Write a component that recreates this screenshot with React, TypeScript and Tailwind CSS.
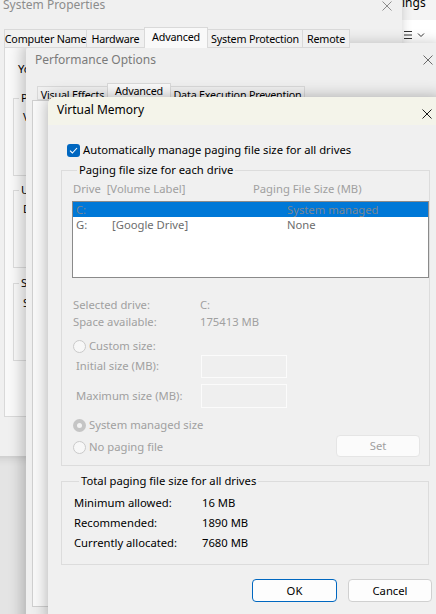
import React from 'react';

const CloseX: React.FC<{ color?: string; className?: string }> = ({ color = '#1a1a1a', className = '' }) => (
  <svg width="10" height="10" viewBox="0 0 10 10" className={className}>
    <path d="M0.5 0.5 L9.5 9.5 M9.5 0.5 L0.5 9.5" stroke={color} strokeWidth="1" fill="none" />
  </svg>
);

const Radio: React.FC<{ checked?: boolean }> = ({ checked }) =>
  checked ? (
    <span className="w-[13px] h-[13px] rounded-full bg-[#c5c5c5] flex items-center justify-center shrink-0">
      <span className="w-[5px] h-[5px] rounded-full bg-[#f3f3f3]" />
    </span>
  ) : (
    <span className="w-[13px] h-[13px] rounded-full border border-[#cacaca] bg-[#f7f7f7] shrink-0" />
  );

const Legend: React.FC<{ children: React.ReactNode }> = ({ children }) => (
  <legend className="ml-[5px] px-[2px] leading-[16px] text-[#000] whitespace-nowrap">{children}</legend>
);

const SysTab: React.FC<{ label: string; w: string; active?: boolean }> = ({ label, w, active }) => (
  <div
    className={`${w} flex items-start justify-center whitespace-nowrap border border-[#d9d9d9] -ml-px ${
      active ? 'h-[21px] bg-[#f9f9f9] border-b-0 pt-[2px]' : 'h-[19px] bg-[#f0f0f0] pt-[2px]'
    }`}
  >
    {label}
  </div>
);

export default function App() {
  return (
    <div className="relative w-[436px] h-[614px] overflow-hidden bg-[#e4e4e4] font-['Noto_Sans','Liberation_Sans',sans-serif] text-[11.25px] text-black">
      {/* background app at top right */}
      <div className="absolute left-[360px] top-0 w-[90px] h-[60px] bg-white">
        <div className="h-[20px] bg-[#f4f4f4] flex items-start text-[12px] leading-[8px] whitespace-nowrap">
          <span className="ml-[20px] -mt-[1px]">Settings</span>
          <span className="ml-[17px] -mt-[1px]">R</span>
        </div>
        <div className="flex items-center mt-[9px] ml-[44px] gap-[5px]">
          <svg width="8" height="10" viewBox="0 0 8 10">
            <path d="M0 1.5 H8 M0 5 H8 M0 8.5 H8" stroke="#333" strokeWidth="1" />
          </svg>
          <svg width="8" height="6" viewBox="0 0 8 6">
            <path d="M1 1.5 L4 4.5 L7 1.5" stroke="#333" strokeWidth="1" fill="none" />
          </svg>
          <span className="ml-[7px] text-[#0067c0] text-[12px] leading-[12px]">1</span>
        </div>
      </div>

      {/* System Properties */}
      <div className="absolute left-[-20px] top-[-6px] w-[422px] h-[462px] bg-[#f0f0f0] shadow-[0_0_10px_rgba(0,0,0,0.18)] flex flex-col">
        <div className="h-[30px] flex items-start justify-between pt-[3px]">
          <span className="ml-[23px] leading-[16px] text-[12px] text-[#8c8c8c]">System Properties</span>
          <CloseX color="#8c8c8c" className="mr-[10px] mt-[4px]" />
        </div>
        <div className="mt-[3px] h-[21px] ml-[25px] flex items-end leading-[15px] text-[10.75px] tracking-[-0.2px] relative z-10">
          <SysTab label="Computer Name" w="w-[83px]" />
          <SysTab label="Hardware" w="w-[59px]" />
          <SysTab label="Advanced" w="w-[64px]" active />
          <SysTab label="System Protection" w="w-[96px]" />
          <SysTab label="Remote" w="w-[48px]" />
        </div>
        <div className="ml-[24px] w-[392px] h-[370px] border border-[#d9d9d9] bg-[#f9f9f9] -mt-px px-[8px] whitespace-nowrap overflow-hidden">
          <div className="pt-[13px] pl-[5px] leading-[16px]">
            You must be logged on as an Administrator to make most of these changes.
          </div>
          <fieldset className="mt-[13px] h-[86px] border border-[#dcdcdc]">
            <Legend>Performance</Legend>
            <div className="pl-[9px] mt-[3px] leading-[16px]">
              Visual effects, processor scheduling, memory usage, and virtual memory
            </div>
          </fieldset>
          <fieldset className="mt-[6px] h-[86px] border border-[#dcdcdc]">
            <Legend>User Profiles</Legend>
            <div className="pl-[9px] mt-[3px] leading-[16px]">Desktop settings related to your sign-in</div>
          </fieldset>
          <fieldset className="mt-[7px] h-[86px] border border-[#dcdcdc]">
            <Legend>Startup and Recovery</Legend>
            <div className="pl-[9px] mt-[4px] leading-[16px]">
              System startup, system failure, and debugging information
            </div>
          </fieldset>
        </div>
      </div>

      {/* Performance Options */}
      <div className="absolute left-[26px] top-[43px] w-[420px] h-[590px] bg-[#efefef] shadow-[-4px_0_14px_rgba(0,0,0,0.22)] rounded-[7px] flex flex-col">
        <div className="h-[40px] flex items-start justify-between pt-[9px]">
          <span className="ml-[9px] leading-[16px] text-[12px] text-[#7a7a7a]">Performance Options</span>
          <CloseX color="#6a6a6a" className="mr-[13px] mt-[3px]" />
        </div>
        <div className="h-[17px] ml-[11px] flex items-end leading-[14px] whitespace-nowrap text-[10.75px] tracking-[-0.2px]">
          <div className="w-[71px] h-[14px] border border-[#d9d9d9] bg-[#f0f0f0] flex justify-center pt-[1px]">
            Visual Effects
          </div>
          <div className="w-[64px] h-[17px] border border-[#d9d9d9] border-b-0 -ml-px bg-[#f9f9f9] flex justify-center">
            Advanced
          </div>
          <div className="w-[135px] h-[14px] border border-[#d9d9d9] -ml-px bg-[#f0f0f0] flex justify-center pt-[1px]">
            Data Execution Prevention
          </div>
        </div>
        <div className="ml-[6px] w-[420px] h-[507px] border border-[#cfcfcf] bg-[#f9f9f9]" />
      </div>

      {/* Virtual Memory */}
      <div className="absolute left-[48px] top-[97px] w-[396px] h-[530px] bg-[#f0f0f0] rounded-[7px] shadow-[0_0_16px_rgba(0,0,0,0.3)] overflow-hidden flex flex-col">
        <div className="h-[28px] bg-[#f4f4ea] flex items-start justify-between pt-[5px]">
          <span className="ml-[9px] leading-[16px] text-[12px]">Virtual Memory</span>
          <CloseX className="mr-[12px] mt-[7px]" />
        </div>
        <div className="px-[13px] flex flex-col">
          <label className="mt-[17px] h-[16px] pl-[6px] flex items-center gap-[3px] leading-[16px]">
            <span className="w-[13px] h-[13px] rounded-[3px] bg-[#0067c0] flex items-center justify-center">
              <svg width="9" height="7" viewBox="0 0 9 7">
                <path d="M1 3.6 L3.4 6 L8 1" stroke="#fff" strokeWidth="1.1" fill="none" />
              </svg>
            </span>
            <span>Automatically manage paging file size for all drives</span>
          </label>

          <fieldset className="mt-[4px] w-[368px] border border-[#dcdcdc] pl-[10px] pb-[10px]">
            <Legend>Paging file size for each drive</Legend>
            <div className="mt-[3px] h-[16px] flex leading-[16px] text-[#a0a0a0] pl-[1px] whitespace-pre">
              <span className="w-[180px]">Drive  [Volume Label]</span>
              <span>Paging File Size (MB)</span>
            </div>
            <div className="mt-[4px] w-[357px] h-[77px] border border-[#8a8a8a] bg-white flex flex-col">
              <div className="h-[15px] bg-[#0078d7] flex leading-[15px] text-[#7d8791] pl-[3px]">
                <span className="w-[211px]">C:</span>
                <span>System managed</span>
              </div>
              <div className="h-[15px] flex leading-[15px] text-[#6d6d6d] pl-[3px]">
                <span className="w-[36px]">G:</span>
                <span className="w-[175px]">[Google Drive]</span>
                <span>None</span>
              </div>
            </div>

            <div className="mt-[18px] flex flex-col text-[#a0a0a0] pl-[1px] leading-[17px]">
              <div className="h-[17px] flex">
                <span className="w-[127px]">Selected drive:</span>
                <span>C:</span>
              </div>
              <div className="h-[17px] flex">
                <span className="w-[127px]">Space available:</span>
                <span>175413 MB</span>
              </div>
            </div>

            <div className="mt-[8px] h-[16px] flex items-center gap-[3px] pl-[1px] text-[#a0a0a0]">
              <Radio />
              <span>Custom size:</span>
            </div>
            <div className="h-[24px] flex items-center text-[#a0a0a0]">
              <span className="w-[129px] pl-[4px]">Initial size (MB):</span>
              <span className="w-[86px] h-[23px] border border-[#fbfbfb] bg-[#efefef]" />
            </div>
            <div className="mt-[6px] h-[24px] flex items-center text-[#a0a0a0]">
              <span className="w-[129px] pl-[4px]">Maximum size (MB):</span>
              <span className="w-[86px] h-[24px] border border-[#fbfbfb] bg-[#efefef]" />
            </div>

            <div className="flex justify-between items-end">
              <div className="flex flex-col text-[#a0a0a0]">
                <div className="mt-[9px] h-[16px] flex items-center gap-[3px] pl-[1px]">
                  <Radio checked />
                  <span>System managed size</span>
                </div>
                <div className="mt-[6px] h-[16px] flex items-center gap-[3px] pl-[1px]">
                  <Radio />
                  <span>No paging file</span>
                </div>
              </div>
              <button className="w-[84px] h-[22px] mr-[9px] -mb-[2px] rounded-[4px] border border-[#e5e5e5] bg-[#fbfbfb] text-[#a0a0a0] leading-[20px]">
                Set
              </button>
            </div>
          </fieldset>

          <fieldset className="mt-[7px] w-[368px] border border-[#dcdcdc] pl-[12px] pb-[11px]">
            <Legend>Total paging file size for all drives</Legend>
            <div className="mt-[4px] flex flex-col leading-[20px]">
              <div className="h-[20px] flex">
                <span className="w-[128px]">Minimum allowed:</span>
                <span>16 MB</span>
              </div>
              <div className="h-[20px] flex">
                <span className="w-[128px]">Recommended:</span>
                <span>1890 MB</span>
              </div>
              <div className="h-[20px] flex">
                <span className="w-[128px]">Currently allocated:</span>
                <span>7680 MB</span>
              </div>
            </div>
          </fieldset>

          <div className="mt-[14px] -mr-[1px] flex justify-end gap-[11px]">
            <button className="w-[85px] h-[23px] rounded-[4px] border border-[#0067c0] bg-[#fdfdfd] leading-[21px]">
              OK
            </button>
            <button className="w-[84px] h-[23px] rounded-[4px] border border-[#d0d0d0] bg-[#fdfdfd] leading-[21px]">
              Cancel
            </button>
          </div>
        </div>
      </div>
    </div>
  );
}
